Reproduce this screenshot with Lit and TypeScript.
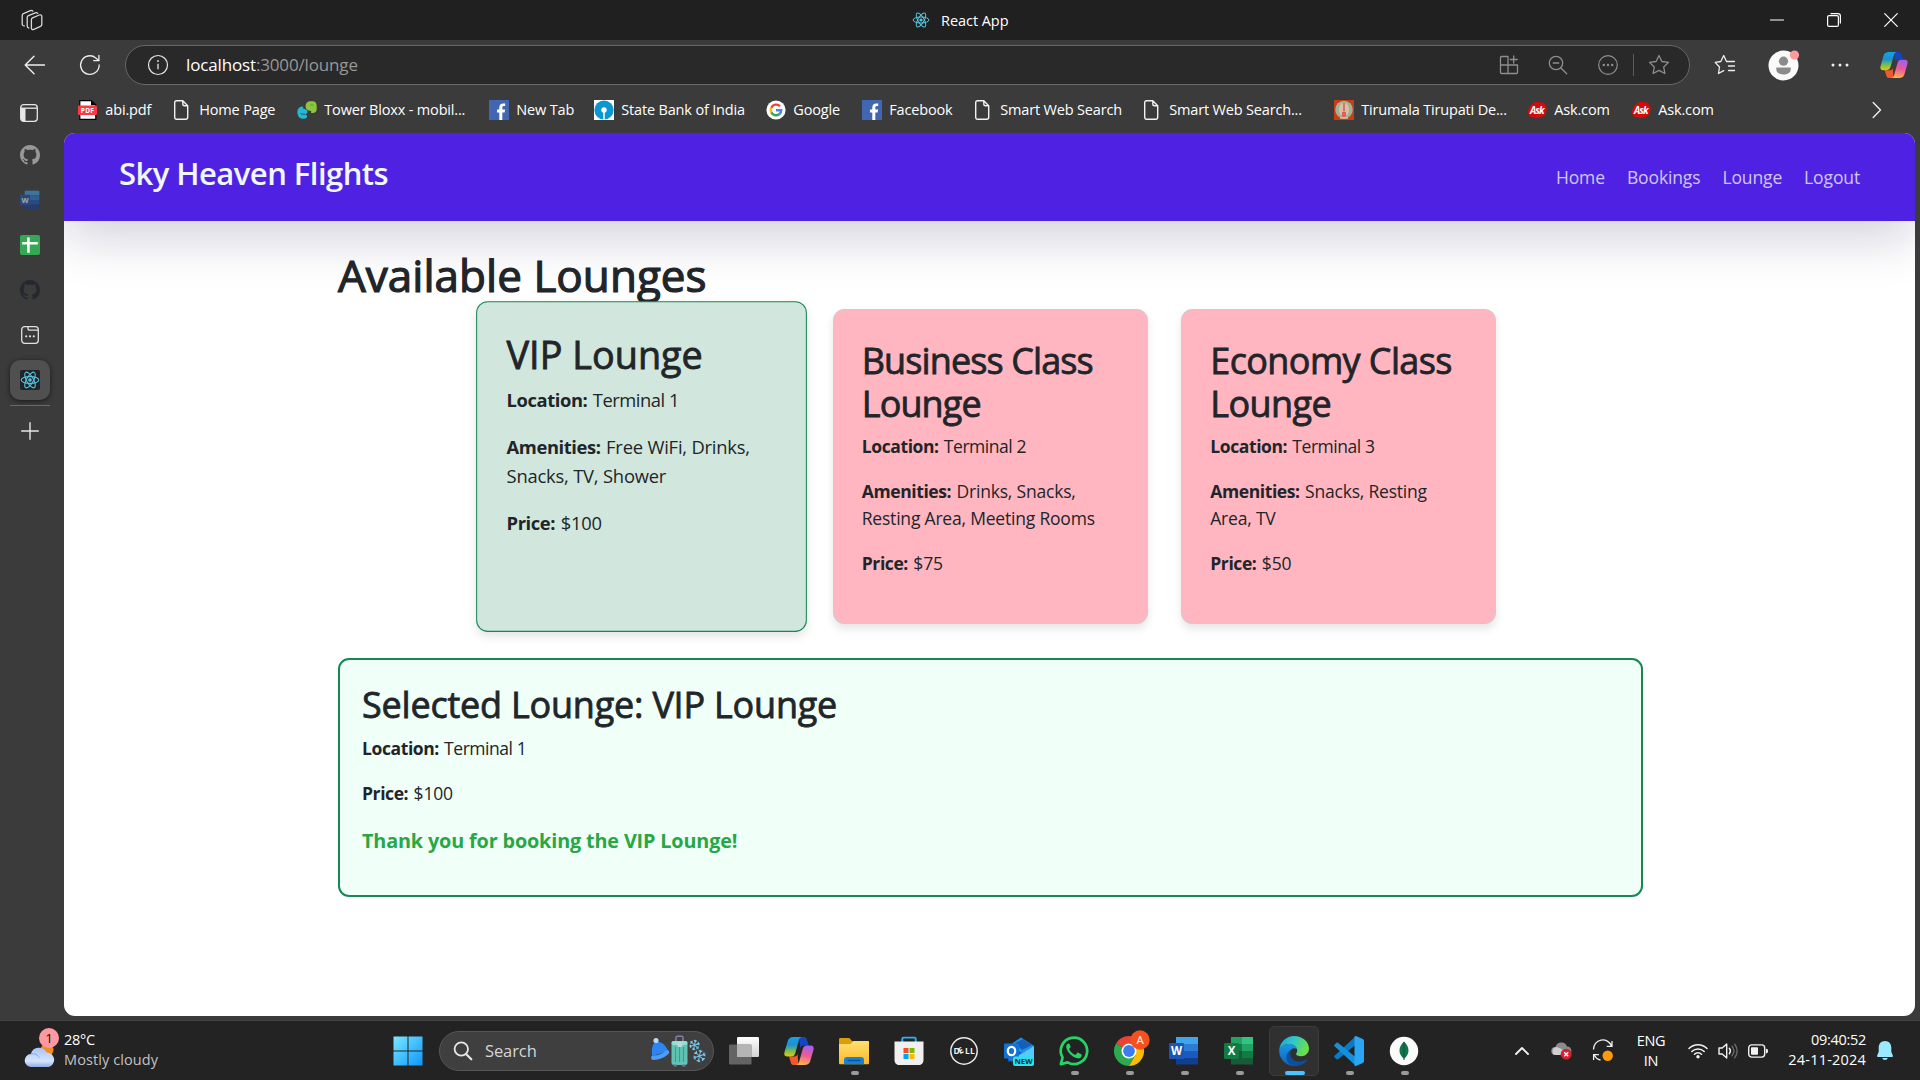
import { LitElement, html, svg, css } from "lit";
import { customElement, property } from "lit/decorators.js";
import { styleMap } from "lit/directives/style-map.js";

/* ---------- icons ---------- */

const react = svg`<g fill="none" stroke="#58c4dc" stroke-width="1.1"><ellipse cx="10" cy="10" rx="8.8" ry="3.4"/><ellipse cx="10" cy="10" rx="8.8" ry="3.4" transform="rotate(60 10 10)"/><ellipse cx="10" cy="10" rx="8.8" ry="3.4" transform="rotate(120 10 10)"/></g><circle cx="10" cy="10" r="1.8" fill="#58c4dc"/>`;

const githubPath = "M8 0C3.58 0 0 3.58 0 8c0 3.54 2.29 6.53 5.47 7.59.4.07.55-.17.55-.38 0-.19-.01-.82-.01-1.49-2.01.37-2.53-.49-2.69-.94-.09-.23-.48-.94-.82-1.13-.28-.15-.68-.52-.01-.53.63-.01 1.08.58 1.23.82.72 1.21 1.87.87 2.33.66.07-.52.28-.87.51-1.07-1.78-.2-3.64-.89-3.64-3.95 0-.87.31-1.59.82-2.15-.08-.2-.36-1.02.08-2.12 0 0 .67-.21 2.2.82.64-.18 1.32-.27 2-.27s1.36.09 2 .27c1.53-1.04 2.2-.82 2.2-.82.44 1.1.16 1.92.08 2.12.51.56.82 1.27.82 2.15 0 3.07-1.87 3.75-3.65 3.95.29.25.54.73.54 1.48 0 1.07-.01 1.93-.01 2.2 0 .21.15.46.55.38A8.01 8.01 0 0 0 16 8c0-4.42-3.58-8-8-8";

const icon = (w: number, h: number, vb: string, body: unknown) =>
  html`<svg class="ico" width=${w} height=${h} viewBox=${vb} aria-hidden="true">${body}</svg>`;

const github = (fill: string) => icon(20, 20, "0 0 16 16", svg`<path fill=${fill} d=${githubPath} />`);

const line = (w: number, h: number, d: string, color = "#eee", sw = 1.3) =>
  icon(w, h, `0 0 ${w} ${h}`, svg`<path d=${d} fill="none" stroke=${color} stroke-width=${sw} stroke-linecap="round" stroke-linejoin="round"/>`);

const page = () => line(20, 20, "M4.6.7h6.2l4.9 5v11.6c0 1.2-.7 2-1.9 2H4.6c-1.2 0-1.9-.8-1.9-2V2.7c0-1.2.7-2 1.9-2zM10.8.7v3.2c0 1.2.6 1.8 1.8 1.8h3.1", "#f2f2f2", 1.4);

const pdf = () => icon(20, 20, "0 0 20 20", svg`<path d="M1.8.6h11.4l4.6 4.4v14.4h-16z" fill="#fff" stroke="#000" stroke-width="1.2"/><path d="M13 .4v4.8h5z" fill="#000"/><rect x="0" y="5.5" width="19" height="9.6" rx="1" fill="#fb3b41"/><text x="9.5" y="13" text-anchor="middle" class="pdf">PDF</text>`);
const tower = () => icon(20, 20, "0 0 20 20", svg`<path d="M13.2 1.300h2.500c2.500 0 4 1.800 4 4.500v3.500c0 2.400-1.600 3.800-4 3.800-1.700 0-2.300-1.300-1.200-2.200-3.400.2-5.900-1.600-5.900-4.400 0-3 1.800-5.200 4.600-5.200z" fill="#8cc63f"/><path d="M.4 12.200c0-3.300 2-5.600 4.700-5.800 1.500 0 1.600 1.200.8 2 3 .3 4.600 1.600 4.600 3.400 0 1.500-1.200 2.400-3 2.400 1.800.2 2.600 1 2.600 2.200 0 1.600-1.800 2.400-4 2.400C2.700 18.800.4 15.800.4 12.200z" fill="#22b8d6"/><path d="M3.500 13.400c1.500 1 3 .9 4.400.8" stroke="#3b3b3b" fill="none" stroke-width=".9"/><path d="M13 5h3.600" stroke="#5b9418" fill="none" stroke-width=".8"/>`);
const facebook = () => icon(20, 20, "0 0 20 20", svg`<rect width="20" height="20" rx=".6" fill="#4267b2"/><path d="M10.300 20v-7.500H8V9.500h2.300V7.400c0-2.600 1.500-4 3.900-4 1 0 2 .1 2 .1v2.600H15c-1.200 0-1.700.7-1.700 1.600v1.800h2.800l-.5 3h-2.300V20z" fill="#fff"/>`);
const sbi = () => icon(20, 20, "0 0 20 20", svg`<rect width="20" height="20" fill="#fff"/><circle cx="10" cy="10" r="9.600" fill="#0b97cf"/><circle cx="10" cy="10" r="2.700" fill="#fff"/><path d="M10 11v9" stroke="#fff" stroke-width="1.500"/>`);
const google = () => icon(20, 20, "0 0 20 20", svg`<circle cx="10" cy="10" r="9.600" fill="#fff"/><g fill="none" stroke-width="2.400"><path d="M14 6.300A5.300 5.300 0 0 0 5.300 7.700" stroke="#ea4335"/><path d="M5.300 7.700a5.300 5.300 0 0 0 0 4.700" stroke="#fbbc05"/><path d="M5.300 12.400a5.300 5.300 0 0 0 8.200 1.600" stroke="#34a853"/><path d="M13.500 14c1.200-1 1.800-2.400 1.700-3.800H10" stroke="#4285f4"/></g>`);
const tirumala = () => icon(20, 20, "0 0 20 20", svg`<rect width="20" height="20" fill="#c63e12"/><ellipse cx="10" cy="9.700" rx="8.800" ry="9" fill="#9db39c"/><ellipse cx="10" cy="9.500" rx="5" ry="7" fill="#e3bd9f"/><path d="M10 2.500v9" stroke="#b98568" stroke-width="2"/><path d="M8 12h4v5H8z" fill="#d9635c"/><path d="M6 18h8" stroke="#f0d8c0"/>`);
const ask = () => icon(20, 20, "0 0 20 20", svg`<path d="M6 3.500C9 1.300 15.500 1.500 18.300 4.500c2.400 3 2 8.500-1.800 11.500-3.500 2.600-9.500 2.800-13 .8C-.5 13.800.5 7.500 6 3.500z" fill="#d30b0b"/><text x="9.800" y="13.600" text-anchor="middle" class="ask">Ask</text>`);

const wordIcon = (dim: boolean) => icon(dim ? 20 : 30, dim ? 20 : 30, "0 0 30 30", svg`<g opacity=${dim ? ".55" : "1"}><path d="M7 1h22v7H7z" fill="#41a5ee"/><path d="M7 8h22v7H7z" fill="#2b7cd3"/><path d="M7 15h22v7H7z" fill="#185abd"/><path d="M7 22h22v6.500H7z" fill="#103f91"/><rect x="0" y="7" width="15" height="16" rx="1.200" fill="#1b55b5"/><text x="7.500" y="19" text-anchor="middle" class="glyph">W</text></g>`);
const excelIcon = () => icon(30, 30, "0 0 30 30", svg`<path d="M7 1h22v7H7z" fill="#21a366"/><path d="M18 1h11v7H18z" fill="#33c481"/><path d="M7 8h22v7H7z" fill="#107c41"/><path d="M18 8h11v7H18z" fill="#21a366"/><path d="M7 15h22v7H7z" fill="#185c37"/><path d="M18 15h11v7H18z" fill="#107c41"/><path d="M7 22h22v6.500H7z" fill="#185c37"/><rect x="0" y="7" width="15" height="16" rx="1.200" fill="#117b43"/><text x="7.500" y="19" text-anchor="middle" class="glyph">X</text>`);

const copilot = (w = 30, h = 28) => icon(w, h, "0 0 30 28", svg`<defs>
  <linearGradient id="ca" x1="0" y1="0" x2="0" y2="1"><stop offset="0" stop-color="#12a4e8"/><stop offset=".4" stop-color="#1f8fd0"/><stop offset=".7" stop-color="#6fbf5a"/><stop offset="1" stop-color="#f2c600"/></linearGradient>
  <linearGradient id="cb" x1=".6" y1="0" x2=".4" y2="1"><stop offset="0" stop-color="#a060f0"/><stop offset=".5" stop-color="#ee5a98"/><stop offset="1" stop-color="#ffb24a"/></linearGradient></defs>
  <path d="M15.500 0H20c1.800 0 2.600 1.300 3.100 3l1.500 5.400h-5c-1.800 0-3 .8-3.500 2.500z" fill="#1446c4"/>
  <path d="M14.500 28h-5c-1.800 0-2.400-1.300-2.900-3l-1.600-5.400h5.200c1.800 0 2.800-.8 3.300-2.500z" fill="#f5582d"/>
  <path d="M9.500 0h8.300c-1.700.3-2.400 1.600-3 3.500L11.300 16c-.6 2.300-2 3.600-4.300 3.600H3.600C.9 19.600-.2 18 .4 15.500L3.800 3.800C4.600 1.300 6.500 0 9.500 0z" fill="url(#ca)"/>
  <path d="M20.500 28h-8.300c1.700-.3 2.400-1.600 3-3.500L18.700 12c.6-2.300 2-3.600 4.300-3.600h3.400c2.700 0 3.800 1.600 3.200 4.100l-3.400 11.700c-.8 2.500-2.700 3.800-5.700 3.800z" fill="url(#cb)"/>`);

const workspaces = () => icon(22, 22, "0 0 22 22", svg`<g fill="none" stroke="#d8d8d8" stroke-width="1.300" stroke-linejoin="round" stroke-linecap="round"><path d="M11.500 8.800 18.300 6c1.400-.5 2.500.1 2.500 1.500v8c0 .9-.4 1.500-1.300 1.900l-6.700 2.900c-1.400.6-2.400 0-2.400-1.400v-8.200c0-.9.300-1.500 1.100-1.900z"/><path d="M7.800 19c-1-.1-1.600-.8-1.600-1.900V8.600c0-.9.4-1.500 1.200-1.900l6.900-2.900c1-.4 1.900-.2 2.400.6"/><path d="M3.300 16.900C2 16.900 1.200 16.100 1.200 15V6.500c0-.9.400-1.500 1.200-1.900l7-3c1-.4 1.900-.2 2.400.5"/></g>`);

const tabsIcon = () => icon(20, 20, "0 0 20 20", svg`<rect x="1.700" y="1.700" width="16.600" height="16.600" rx="3" fill="none" stroke="#e6e6e6" stroke-width="1.300"/><path d="M2 5.200h4.500v13H4A2 2 0 0 1 2 16z" fill="#e6e6e6"/><path d="M2 5.200h16" stroke="#e6e6e6" stroke-width="1.300"/>`);
const sheet = () => icon(20, 20, "0 0 20 20", svg`<rect width="20" height="20" rx="2" fill="#34a853"/><path d="M8.400 2.500v15.300M2.200 8.300h15.600" stroke="#fff" stroke-width="2.600"/>`);
const tabGroup = () => icon(20, 20, "0 0 20 20", svg`<g fill="none" stroke="#e0e0e0" stroke-width="1.300"><rect x="1.700" y="1.700" width="16.600" height="16.600" rx="3"/><path d="M8 1.700v1.800c0 1 .6 1.700 1.700 1.700h8.500"/></g><g fill="#e0e0e0"><circle cx="6.200" cy="11.300" r="1.100"/><circle cx="10" cy="11.300" r="1.100"/><circle cx="13.800" cy="11.300" r="1.100"/></g>`);
const reactTile = () => icon(20, 20, "0 0 20 20", svg`<rect width="20" height="20" rx="2" fill="#20232a"/>${react}`);
const reload = () => icon(22, 22, "0 0 22 22", svg`<g fill="none" stroke="#eee" stroke-width="1.300" stroke-linecap="round"><path d="M20.200 11a9.300 9.300 0 1 1-3.400-7.100L19.700 6.400"/><path d="M19.900 1.400v5.200h-5.200"/></g>`);
const info = () => icon(22, 22, "0 0 22 22", svg`<circle cx="11" cy="11" r="9.500" fill="none" stroke="#e6e6e6" stroke-width="1.200"/><path d="M11 9.800v5.400" stroke="#e6e6e6" stroke-width="1.300"/><circle cx="11" cy="7" r=".9" fill="#e6e6e6"/>`);
const dots = () => icon(20, 20, "0 0 20 20", svg`<g fill="#eee"><circle cx="3" cy="10" r="1.500"/><circle cx="10" cy="10" r="1.500"/><circle cx="17" cy="10" r="1.500"/></g>`);
const moreCircle = () => icon(22, 22, "0 0 22 22", svg`<circle cx="11" cy="11" r="9.300" fill="none" stroke="#8e8e8e" stroke-width="1.200"/><g fill="#8e8e8e"><circle cx="6.800" cy="11" r="1.200"/><circle cx="11" cy="11" r="1.200"/><circle cx="15.200" cy="11" r="1.200"/></g>`);
const avatar = () => icon(32, 32, "0 0 32 32", svg`<circle cx="15.500" cy="16.500" r="15" fill="#fafafa"/><circle cx="15.500" cy="12.200" r="4.600" fill="#8b8b8b"/><path d="M8.300 18.600h14.400v1.800c0 3.300-3.400 5-7.200 5s-7.200-1.700-7.200-5z" fill="#8b8b8b"/><circle cx="26.500" cy="6" r="4.600" fill="#ff9a9a"/>`);

const cloud = () => icon(32, 30, "0 0 32 30", svg`<defs><linearGradient id="cl" x1="0" y1="0" x2="0" y2="1"><stop offset="0" stop-color="#a9c5f5"/><stop offset=".7" stop-color="#d5e4fb"/><stop offset="1" stop-color="#8faeea"/></linearGradient></defs><circle cx="23" cy="12" r="6.500" fill="#f68b1f"/><path d="M7.500 29A6.500 6.500 0 0 1 6.800 16a8.500 8.500 0 0 1 15.800-1.600A7.400 7.400 0 0 1 24.500 29z" fill="url(#cl)"/><path d="M6.800 16c4-1 7 1 8.500 3.500" stroke="#89a8e6" fill="none"/>`);
const windows = () => icon(30, 30, "0 0 30 30", svg`<defs><linearGradient id="wi" gradientUnits="userSpaceOnUse" x1="0" y1="0" x2="30" y2="30"><stop offset="0" stop-color="#7deaff"/><stop offset="1" stop-color="#0a94ff"/></linearGradient></defs><path d="M.5.500h14v14H.5zM15.500.500h14v14h-14zM.5 15.500h14v14H.5zM15.500 15.500h14v14h-14z" fill="url(#wi)"/>`);
const magnifier = () => icon(20, 20, "0 0 20 20", svg`<circle cx="8.300" cy="8" r="6.700" fill="none" stroke="#e8e8e8" stroke-width="1.800"/><path d="m13.300 13.300 5 5" stroke="#e8e8e8" stroke-width="2.200" stroke-linecap="round"/>`);
const flake = (x: number, y: number, r: number) => svg`<g transform="translate(${x} ${y}) rotate(12)" stroke="#7cc9ee" stroke-width="1" fill="none">${[0, 60, 120, 180, 240, 300].map(a => svg`<path transform="rotate(${a})" d="M0 0V${-r}M${-r * 0.28} ${-r * 0.9}L0 ${-r * 0.6}L${r * 0.28} ${-r * 0.9}"/>`)}</g>`;
const searchArt = () => icon(58, 32, "0 0 58 32", svg`<path d="M2.200 21C1.200 13.500 2.500 8 6.500 6.800c5.500-.6 9.500 4 11.700 9.200z" fill="#2c86f2"/><path d="M3.300 22.800C8 22.600 13.500 20.500 17 17.300" stroke="#4a9df8" stroke-width="4.400" stroke-linecap="round" fill="none"/><circle cx="6" cy="5.500" r="2.600" fill="#b7d9fb"/><path d="M26 7V2.800c0-1 .6-1.500 1.500-1.500h4c.9 0 1.500.5 1.500 1.500V7" fill="none" stroke="#86809c" stroke-width="1.500"/><rect x="21.500" y="6" width="16" height="24" rx="2.500" fill="#5fc4b4"/><path d="M25.500 12v15M29.500 12v15M33.500 12v15" stroke="#39a090" stroke-width="1.200"/><rect x="21.500" y="6" width="16" height="4" rx="2" fill="#8de0d2"/><path d="M27 7.500h6l-1 4.500h-4z" fill="#b7dcd8"/><path d="M23.500 30.500h3.500M32 30.500h3.500" stroke="#7a6b9c" stroke-width="1.800"/>${flake(44.500, 10, 5.300)}${flake(49.500, 21, 6.300)}`);
const taskView = () => icon(30, 30, "0 0 30 30", svg`<defs><linearGradient id="tv" x1="0" y1="0" x2="0" y2="1"><stop offset="0" stop-color="#fff"/><stop offset="1" stop-color="#d2d2d2"/></linearGradient></defs><rect x="8" y="1" width="22" height="20" rx="1.200" fill="url(#tv)"/><rect x="0" y="8.500" width="22.500" height="20" rx="1.200" fill="#6c6c6c" opacity=".88"/><path d="M8 8.500h14.500V21H8z" fill="#b4b4b4"/>`);
const explorer = () => icon(30, 30, "0 0 30 30", svg`<defs><linearGradient id="fo" x1="0" y1="0" x2="0" y2="1"><stop offset="0" stop-color="#ffdf72"/><stop offset="1" stop-color="#fcb925"/></linearGradient></defs><path d="M0 3.500C0 2.500.5 2 1.500 2h8.800l3.200 3.500V10H0z" fill="#dc9d08"/><path d="M0 8h11.500L14 5h15c.7 0 1 .3 1 1v21c0 .8-.4 1.300-1.200 1.300H1.200C.4 28.300 0 27.800 0 27z" fill="url(#fo)"/><path d="M5 28.300V24c0-2 1-3 3-3h14c2 0 3 1 3 3v4.300z" fill="#1483d8"/><path d="M9 24.500h12" stroke="#0a559c" stroke-width="1.400" stroke-linecap="round"/>`);
const store = () => icon(30, 30, "0 0 30 30", svg`<path d="M8.300 7V2.700c0-.7.400-1.100 1.100-1.100h11.200c.7 0 1.100.4 1.100 1.100V7" fill="none" stroke="#25b4f5" stroke-width="1.900"/><path d="M.5 5.500h29V24c0 3-2 5-5 5h-19c-3 0-5-2-5-5z" fill="#f0f0f0"/><path d="M9.500 12h5v5h-5z" fill="#f25022"/><path d="M15.500 12h5v5h-5z" fill="#7fba00"/><path d="M9.500 18h5v5h-5z" fill="#00a4ef"/><path d="M15.500 18h5v5h-5z" fill="#ffb900"/>`);
const dell = () => icon(30, 30, "0 0 30 30", svg`<circle cx="15" cy="15" r="13.200" fill="none" stroke="#e8e8e8" stroke-width="1.500"/><text x="4.500" y="18.200" class="dell" textLength="21">D<tspan rotate="-28">E</tspan>LL</text>`);
const outlook = () => icon(30, 30, "0 0 30 30", svg`<path d="M4 10 17 1.500 30 10v15.500H4z" fill="#0a5cc0"/><path d="M9 7 17 1.500 30 10 18 17 9 12z" fill="#1e90ea"/><path d="m11 7 8-4 9 6-10 5z" fill="#155fb8"/><path d="M30 10 15 19v9.500h15z" fill="#57c9fb"/><path d="M15 19v9L5 24v-4z" fill="#1a79dd"/><rect x="0" y="7.500" width="15" height="15" rx="1.200" fill="#1173d4"/><ellipse cx="7.500" cy="15" rx="3.700" ry="4.200" fill="none" stroke="#fff" stroke-width="2.200"/><rect x="9" y="20.500" width="21" height="9.500" rx="2" fill="#2fe0ea"/><text x="19.500" y="28" text-anchor="middle" class="new">NEW</text>`);
const whatsapp = () => icon(30, 30, "0 0 30 30", svg`<path d="M1.800 28.200 3.600 21.600A13.200 13.200 0 1 1 8.500 26.400z" fill="none" stroke="#25d366" stroke-width="2.700" stroke-linejoin="round"/><path d="M10.500 8c-.5-.9-1.500-.7-2.200.1-1 1-1.300 2.400-.9 4 1.200 4.700 6 9.300 10.900 10.200 2.200.4 4.200-.8 4.400-2.900.1-.6 0-.9-.5-1.200l-3-1.500c-.5-.2-.8-.1-1.100.3l-1.200 1.500c-.3.400-.6.400-1.100.2-2.600-1.100-4.400-2.900-5.500-5.100-.2-.4-.1-.7.2-1l.9-1.100c.3-.4.300-.7.100-1.100z" fill="#25d366"/>`);
const chrome = () => icon(36, 36, "0 0 36 36", svg`<path d="M15 21 2 13.500A15 15 0 0 1 28 13.500H15z" fill="#ea4335"/><path d="M15 21 2 13.500A15 15 0 0 0 15 36l6.500-11.200z" fill="#2da94f"/><path d="M15 21 21.500 13.500H28A15 15 0 0 1 15 36l6.500-11.200z" fill="#fdbd00"/><circle cx="15" cy="21" r="7.500" fill="#fff"/><circle cx="15" cy="21" r="5.900" fill="#3c7cf0"/><circle cx="26" cy="10" r="9.700" fill="#f4511e"/><text x="26" y="14.200" text-anchor="middle" class="badge-a">A</text>`);
const edge = () => icon(30, 30, "0 0 30 30", svg`<defs><linearGradient id="ea" x1="0" y1="0" x2="1" y2=".35"><stop offset="0" stop-color="#1e9de0"/><stop offset=".5" stop-color="#31c7c4"/><stop offset="1" stop-color="#6ae04a"/></linearGradient><linearGradient id="eb" x1="0" y1="0" x2="0" y2="1"><stop offset="0" stop-color="#1899e0"/><stop offset="1" stop-color="#0f62c0"/></linearGradient></defs><path d="M.3 13.500C1.300 5.500 7.500 0 15 0c8.500 0 15 5.700 15 12.700 0 4.300-3.500 7.500-7.800 7.500-3.500 0-5.200-1-5.200-2.100 0-.8 1.200-1.300 1.200-3.600C18.200 10.500 14 8 9.500 8 5 8 1.800 10.500.3 13.500z" fill="url(#ea)"/><path d="M.2 15C.2 11 4 8 9.500 8c4.300 0 8 2.200 8.700 5.600C17 12 14.500 11.600 13 13c-3 2.500-3.500 9 1.500 13 2.500 2 5 2.500 7.500 2.300A15 15 0 0 1 .2 15z" fill="url(#eb)"/><path d="M12.200 13.800c-2.400 4.200-.5 9.700 4.300 11.200 4 1.200 7.800.3 10.600-1.600.6-.4 1.200.1.800.8-2.300 3.700-7 5.900-11.900 5.800-6.500-.6-9.300-5.800-8.500-10 .6-3.200 2.600-5.400 4.700-6.200z" fill="#0c4f9f"/>`);
const vscode = () => icon(30, 30, "0 0 30 30", svg`<path d="M22 0 .8 19.500c-.8.700-.8 1.500-.1 2.100l1.700 1.500c.6.500 1.300.5 1.900 0L22 8.500z" fill="#0b7bc6"/><path d="M22 30 .8 10.500c-.8-.7-.8-1.500-.1-2.100l1.700-1.500c.6-.5 1.300-.5 1.900 0L22 21.500z" fill="#1590dd"/><path d="M22 0 28.800 3c.8.400 1.200 1 1.200 1.900v20.200c0 .9-.4 1.500-1.200 1.900L22 30c-.9.200-1.500-.3-1.500-1.200V1.200C20.500.300 21.100-.200 22 0z" fill="#2aa6f2"/>`);
const mongo = () => icon(30, 30, "0 0 30 30", svg`<circle cx="15" cy="15" r="14.200" fill="#fbfbfb"/><path d="M15 5.500c3.500 3.300 4.500 6.300 4.500 9.300 0 3.200-1.700 5.700-4.500 8-2.800-2.300-4.500-4.800-4.500-8 0-3 1-6 4.500-9.300z" fill="#10744c"/><path d="M15 6v18" stroke="#0a5639" stroke-width="1"/>`);

const oneDrive = () => icon(22, 20, "0 0 22 20", svg`<path d="M4 14a4 4 0 0 1 .5-8A6 6 0 0 1 16 5.500a4.300 4.300 0 0 1 1 8.500z" fill="#8b8b8b"/><path d="M4 14a4.200 4.200 0 0 1 1-8c3 0 6 2.500 9 4l-2 4z" fill="#cfcfcf"/><circle cx="15.200" cy="13.200" r="5.500" fill="#d91f2f"/><path d="m13.200 11.200 4 4m0-4-4 4" stroke="#fff" stroke-width="1.400"/>`);
const sync = () => icon(22, 22, "0 0 22 22", svg`<g fill="none" stroke="#efefef" stroke-width="1.300"><path d="M1.500 9.500A9.300 9.300 0 0 1 19.500 6M20 1v5.300h-5.300M8.500 20C5.500 19.500 3.500 17.500 2.300 15M1.600 20v-5.300h5.300"/></g><circle cx="15.700" cy="15.700" r="5.200" fill="#ff9a0c"/>`);
const wifi = () => icon(20, 16, "0 0 20 16", svg`<g fill="none" stroke="#f2f2f2" stroke-width="1.500" stroke-linecap="round"><path d="M1 5.500a12.500 12.500 0 0 1 18 0"/><path d="M3.800 8.500a8.700 8.700 0 0 1 12.400 0"/><path d="M6.500 11.300a5 5 0 0 1 7 0"/></g><circle cx="10" cy="13.800" r="1.700" fill="#f2f2f2"/>`);
const volume = () => icon(20, 18, "0 0 20 18", svg`<g fill="none" stroke-width="1.400" stroke-linecap="round" stroke-linejoin="round"><path d="M1 6h3.200L8.700 2v14L4.200 12H1z" stroke="#f2f2f2"/><path d="M11.300 6.300c1.300 1.600 1.300 3.800 0 5.400" stroke="#f2f2f2"/><path d="M14 4.300c2.300 2.800 2.300 6.600 0 9.400M16.700 2.300c3.200 4 3.200 9.400 0 13.400" stroke="#686868"/></g>`);
const battery = () => icon(20, 14, "0 0 20 14", svg`<rect x=".7" y=".9" width="16" height="12.200" rx="3" fill="none" stroke="#f2f2f2" stroke-width="1.400"/><rect x="3" y="3.200" width="7" height="7.600" rx=".8" fill="#f2f2f2"/><path d="M18 4.700c1.500 0 2 .8 2 2.300s-.5 2.300-2 2.300z" fill="#f2f2f2"/>`);
const bell = () => icon(18, 20, "0 0 18 20", svg`<path d="M9 0c3.800 0 6.300 2.800 6.300 6.500v4.200l1.600 4c.2.700 0 1.200-.8 1.200H1.900c-.8 0-1-.5-.8-1.200l1.600-4V6.500C2.700 2.800 5.200 0 9 0zM6.300 17h5.400c-.2 1.300-1.300 2-2.700 2s-2.500-.7-2.700-2z" fill="#9be8ff"/>`);

/* ---------- shared styles ---------- */

const shared = css`
  * { box-sizing: border-box; }
  :host { display: block; box-sizing: border-box; font-family: "Open Sans", "Noto Sans", sans-serif; }
  .ico { display: block; flex: none; overflow: visible; }
  .slot { display: flex; align-items: center; justify-content: center; flex: none; }
`;

/* ---------- browser chrome ---------- */

interface Bookmark { label: string; icon: () => unknown; width: number; }

const bookmarks: Bookmark[] = [
  { label: "abi.pdf", icon: pdf, width: 94 },
  { label: "Home Page", icon: page, width: 125 },
  { label: "Tower Bloxx - mobil...", icon: tower, width: 192 },
  { label: "New Tab", icon: facebook, width: 105 },
  { label: "State Bank of India", icon: sbi, width: 172 },
  { label: "Google", icon: google, width: 96 },
  { label: "Facebook", icon: facebook, width: 111 },
  { label: "Smart Web Search", icon: page, width: 169 },
  { label: "Smart Web Search...", icon: page, width: 192 },
  { label: "Tirumala Tirupati De...", icon: tirumala, width: 193 },
  { label: "Ask.com", icon: ask, width: 104 },
  { label: "Ask.com", icon: ask, width: 104 },
];

@customElement("browser-top")
export class BrowserTop extends LitElement {
  static styles = [shared, css`
    .title { height: 40px; background: #202020; display: flex; align-items: center; padding: 0 22px 0 21px; color: #fff; }
    .tab { flex: 1; display: flex; align-items: center; padding-left: 869px; gap: 11px; font-size: 14.500px; letter-spacing: -.05px; }
    .controls { display: flex; gap: 43px; }
    .bar { height: 50px; display: flex; align-items: center; background: #3b3b3b; padding-left: 24px; }
    .reload { width: 66px; padding-left: 22px; }
    .address { width: 1565px; height: 40px; margin-left: 13px; border: 1.500px solid #686868; border-radius: 20px; background: #292929; display: flex; align-items: center; padding: 0 19.500px 0 20.500px; }
    .url { margin-left: 17.500px; padding-bottom: 2px; font-size: 17px; letter-spacing: -.15px; color: #979797; flex: 1; }
    .host { color: #fff; }
    .actions { display: flex; align-items: center; gap: 29px; }
    .tail { display: flex; align-items: center; gap: 14px; }
    .divider { width: 1px; height: 22px; background: #5c5c5c; }
    .right { display: flex; align-items: center; margin-left: 24px; gap: 30px; flex: 1; }
    .right .ico:first-child { margin-right: 2px; }
    .marks { height: 43px; background: #3b3b3b; display: flex; align-items: center; padding: 0 38px 4px 78px; }
    .mark { display: flex; align-items: center; gap: 7.300px; font-size: 14.500px; letter-spacing: -.17px; color: #fff; white-space: nowrap; flex: none; }
    .next { margin-left: auto; }
    .pdf { font: bold 6.500px "Open Sans", sans-serif; fill: #fff; letter-spacing: .3px; }
    .ask { font: italic bold 9.800px "Open Sans", sans-serif; fill: #fff; letter-spacing: -1px; }
  `];

  render() {
    return html`
      <div class="title">
        ${workspaces()}
        <div class="tab">${icon(18, 18, "0 0 20 20", react)}<span>React App</span></div>
        <div class="controls">
          ${line(14, 14, "M.5 7h13", "#fff", 1.2)}
          ${icon(14, 14, "0 0 14 14", svg`<g fill="none" stroke="#fff" stroke-width="1.200"><rect x=".6" y="2.600" width="10.800" height="10.800" rx="1.500"/><path d="M3.500.6h7.500c1.600 0 2.400.8 2.400 2.400V10.500"/></g>`)}
          ${line(14, 14, "M.7.7l12.600 12.600M13.300.7.7 13.300", "#fff", 1.2)}
        </div>
      </div>
      <div class="bar">
        ${line(22, 20, "M20.500 10H1.500M10 1.300 1.200 10 10 18.700", "#eee", 1.4)}
        <span class="slot reload">${reload()}</span>
        <div class="address">
          ${info()}
          <span class="url"><span class="host">localhost</span>:3000/lounge</span>
          <div class="actions">
            ${line(20, 20, "M1.500 2.500c0-.6.300-1 1-1h6.500v17h-6.500c-.7 0-1-.4-1-1zM1.500 10h17M9 10v8.500h8.500c.7 0 1-.4 1-1V10M14.700 1v7M11.200 4.500h7", "#8e8e8e")}
            ${icon(20, 20, "0 0 20 20", svg`<g fill="none" stroke="#8e8e8e" stroke-width="1.300" stroke-linecap="round"><circle cx="8" cy="8" r="6.700"/><path d="m13 13 5.700 5.700M5.200 8h5.600"/></g>`)}
            <div class="tail">
              ${moreCircle()}<span class="divider"></span>
              ${line(22, 22, "M11 1.500l2.900 6 6.600.9-4.800 4.600 1.200 6.500-5.900-3.100-5.900 3.100 1.200-6.500L1.500 8.400l6.600-.9z", "#8e8e8e")}
            </div>
          </div>
        </div>
        <div class="right">
          ${line(22, 22, "M13 7.500h7.500M14.500 12h6M14.500 16.500h6M12.500 7.500 9.700 1.500l-2.900 6-5.600.9 4.300 4.600-1 6.500 5.200-2.900", "#eee")}
          ${avatar()}${dots()}${copilot(28, 26)}
        </div>
      </div>
      <div class="marks">
        ${bookmarks.map(b => html`<div class="mark" style=${styleMap({ width: `${b.width}px` })}>${b.icon()}<span>${b.label}</span></div>`)}
        <span class="next">${line(10, 20, "M1.200 2.500 8.500 10l-7.300 7.500", "#eee", 1.4)}</span>
      </div>`;
  }
}

@customElement("side-tabs")
export class SideTabs extends LitElement {
  static styles = [shared, css`
    :host { width: 64px; flex: none; }
    .rail { display: flex; flex-direction: column; align-items: center; width: 60px; margin-top: -1px; }
    .slot { width: 40px; height: 40px; margin-bottom: 5px; }
    .first { height: 20px; margin: -29px 0 12px -2px; }
    .active { background: #505050; border-radius: 10px; box-shadow: 0 1px 5px rgba(0, 0, 0, .6); }
    .sep { width: 40px; height: 1px; background: #6a6a6a; margin-bottom: 5px; }
    .glyph { font: bold 11px "Open Sans", sans-serif; fill: #fff; }
  `];
  render() {
    return html`<div class="rail">
      <span class="slot first">${tabsIcon()}</span>
      <span class="slot">${github("#989898")}</span>
      <span class="slot">${wordIcon(true)}</span>
      <span class="slot">${sheet()}</span>
      <span class="slot">${github("#24292f")}</span>
      <span class="slot">${tabGroup()}</span>
      <span class="slot active">${reactTile()}</span>
      <span class="sep"></span>
      <span class="slot">${line(18, 18, "M9 .7v16.600M.7 9h16.600", "#e6e6e6", 1.4)}</span>
    </div>`;
  }
}

/* ---------- web page ---------- */

interface Lounge { name: string; location: string; amenities: string; price: number; tracking: number; }

const lounges: Lounge[] = [
  { name: "VIP Lounge", location: "Terminal 1", amenities: "Free WiFi, Drinks, Snacks, TV, Shower", price: 100, tracking: 0 },
  { name: "Business Class Lounge", location: "Terminal 2", amenities: "Drinks, Snacks, Resting Area, Meeting Rooms", price: 75, tracking: -0.9 },
  { name: "Economy Class Lounge", location: "Terminal 3", amenities: "Snacks, Resting Area, TV", price: 50, tracking: -0.6 },
];

@customElement("lounge-page")
export class LoungePage extends LitElement {
  @property({ attribute: false }) selected = lounges[0];

  static styles = [shared, css`
    :host { flex: 1; background: #fff; border-radius: 11px; overflow: hidden; color: #212529; font-size: 17.500px; line-height: 27px; letter-spacing: -.2px; }
    .header { height: 88px; background: #4f22e3; display: flex; align-items: center; justify-content: space-between; padding: 0 55px; box-shadow: 0 18px 50px rgba(14, 4, 70, .175); }
    .brand { font-size: 31px; line-height: 40px; font-weight: 600; letter-spacing: -.54px; color: #f0f8ff; margin-bottom: 9px; }
    .nav { display: flex; gap: 22px; color: #d0c8ee; letter-spacing: -.13px; }
    .container { width: 1304.500px; margin: 25px 0 0 274px; }
    h1, h2, p { margin: 0; }
    h1, h2 { font-weight: 400; -webkit-text-stroke: .8px #212529; }
    h1 { font-size: 44px; line-height: 54px; margin: 27px 0 7px; letter-spacing: .03px; -webkit-text-stroke-width: 1.200px; }
    h2 { font-size: 36px; line-height: 43.200px; margin-bottom: 8.500px; letter-spacing: -.22px; }
    p { margin-bottom: 18px; }
    b { font-weight: 700; letter-spacing: -.4px; margin-right: 1px; }
    .location { letter-spacing: -.45px; }
    .cards { display: flex; justify-content: center; gap: 33.500px; }
    .card { width: 315px; height: 315px; padding: 28.500px 28px; border: 1px solid #ccc; border-radius: 11px; background: #ffb6c1; box-shadow: 0 4.500px 9px rgba(0, 0, 0, .1); }
    .card.on { background: #d1e7dd; border-color: #198754; transform: scale(1.05); }
    .picked { margin-top: 34px; height: 239px; padding: 22.500px 22px; border: 2px solid #198754; border-radius: 11px; background: #f0fff8; }
    .picked h2 { margin-bottom: 9.500px; }
    .thanks { color: #28a745; font-weight: 700; font-size: 19.800px; line-height: 29.700px; letter-spacing: -.14px; margin-top: 19px; }
  `];

  render() {
    return html`
      <div class="header">
        <div class="brand">Sky Heaven Flights</div>
        <nav class="nav"><span>Home</span><span>Bookings</span><span>Lounge</span><span>Logout</span></nav>
      </div>
      <div class="container">
        <h1>Available Lounges</h1>
        <div class="cards">${lounges.map(l => html`
          <div class="card ${l === this.selected ? "on" : ""}">
            <h2 style=${styleMap({ letterSpacing: `${l.tracking}px` })}>${l.name}</h2>
            <p class="location"><b>Location:</b> ${l.location}</p>
            <p><b>Amenities:</b> ${l.amenities}</p>
            <p><b>Price:</b> $${l.price}</p>
          </div>`)}
        </div>
        <div class="picked">
          <h2>Selected Lounge: ${this.selected.name}</h2>
          <p class="location"><b>Location:</b> ${this.selected.location}</p>
          <p><b>Price:</b> $${this.selected.price}</p>
          <p class="thanks">Thank you for booking the ${this.selected.name}!</p>
        </div>
      </div>`;
  }
}

/* ---------- taskbar ---------- */

const apps: { icon: () => unknown; state?: string }[] = [
  { icon: taskView }, { icon: () => copilot() }, { icon: explorer, state: "run" }, { icon: store }, { icon: dell },
  { icon: outlook }, { icon: whatsapp, state: "run" }, { icon: chrome, state: "run badge" }, { icon: () => wordIcon(false), state: "run" },
  { icon: excelIcon, state: "run" }, { icon: edge, state: "run active" }, { icon: vscode, state: "run" }, { icon: mongo, state: "run" },
];

@customElement("task-bar")
export class TaskBar extends LitElement {
  static styles = [shared, css`
    :host { height: 60px; flex: none; background: #232323; border-top: 1px solid #414141; color: #fff; font-size: 14.500px; line-height: 20px; letter-spacing: -.3px; display: flex; align-items: center; }
    .weather { display: flex; align-items: center; width: 368px; padding: 0 0 2px 24px; gap: 8px; }
    .weather-icon { position: relative; padding-top: 6px; }
    .count { position: absolute; left: 15px; top: -4px; width: 20px; height: 20px; border-radius: 50%; background: #ff98a1; color: #111; text-align: center; font-size: 13.500px; line-height: 20px; }
    .muted { color: #c2c2c2; letter-spacing: .1px; }
    .start { width: 71px; padding-left: 24.500px; }
    .search { width: 275px; height: 40px; border: 1px solid #565656; border-radius: 20px; background: #3f3f3f; display: flex; align-items: center; padding: 0 5.500px 0 13px; margin-right: 2.500px; }
    .search-label { flex: 1; padding-left: 12px; color: #d6d6d6; font-size: 16.500px; letter-spacing: -.1px; }
    .apps { display: flex; }
    .app { width: 55px; height: 50px; display: flex; align-items: center; justify-content: center; position: relative; }
    .app.run::after { content: ""; position: absolute; left: 24px; bottom: 1px; width: 8px; height: 4px; border-radius: 2px; background: #9a9a9a; }
    .app.active::before { content: ""; position: absolute; inset: 0 3px 0 2px; border: 1px solid #3c3c3c; border-radius: 5px; background: #303030; }
    .app.active::after { left: 18px; width: 20px; background: #4cc2ff; }
    .app.badge .ico { margin: -6px 0 0 6px; }
    .app .ico { position: relative; }
    .tray { margin-left: auto; display: flex; align-items: center; padding-right: 26px; }
    .hidden-icons { display: flex; align-items: center; gap: 22px; }
    .hidden-icons .ico:last-child { margin-left: -3px; }
    .lang { width: 36px; text-align: center; margin: 0 19px 0 19px; padding-top: 1px; }
    .clock { width: 98px; text-align: right; padding-bottom: 2px; }
    .date { letter-spacing: .2px; }
    .status { display: flex; align-items: center; gap: 10px; }
    .notify { margin-left: 10px; }
    .glyph { font: bold 11.500px "Open Sans", sans-serif; fill: #fff; }
    .dell { font: bold 8.500px "Open Sans", sans-serif; fill: #f0f0f0; }
    .new { font: bold 7.800px "Open Sans", sans-serif; fill: #06304a; letter-spacing: 0; }
    .badge-a { font: 11.500px "Open Sans", sans-serif; fill: #fff; }
  `];

  render() {
    return html`
      <div class="weather">
        <div class="weather-icon">${cloud()}<span class="count">1</span></div>
        <div><div>28°C</div><div class="muted">Mostly cloudy</div></div>
      </div>
      <div class="start">${windows()}</div>
      <div class="search">${magnifier()}<span class="search-label">Search</span>${searchArt()}</div>
      <div class="apps">${apps.map(a => html`<div class="app ${a.state ?? ""}">${a.icon()}</div>`)}</div>
      <div class="tray">
        <div class="hidden-icons">${line(14, 8, "M1 7l6-6 6 6", "#f2f2f2", 1.9)}${oneDrive()}${sync()}</div>
        <div class="lang">ENG<br />IN</div>
        <div class="status">${wifi()}${volume()}${battery()}</div>
        <div class="clock"><div>09:40:52</div><div class="date">24-11-2024</div></div>
        <span class="notify">${bell()}</span>
      </div>`;
  }
}

@customElement("app-root")
export class AppRoot extends LitElement {
  static styles = css`
    :host { display: flex; flex-direction: column; width: 1920px; height: 1080px; background: #3b3b3b; overflow: hidden; }
    .main { flex: 1; display: flex; padding: 0 5px 4px 0; min-height: 0; }
  `;
  render() {
    return html`<browser-top></browser-top><div class="main"><side-tabs></side-tabs><lounge-page></lounge-page></div><task-bar></task-bar>`;
  }
}
